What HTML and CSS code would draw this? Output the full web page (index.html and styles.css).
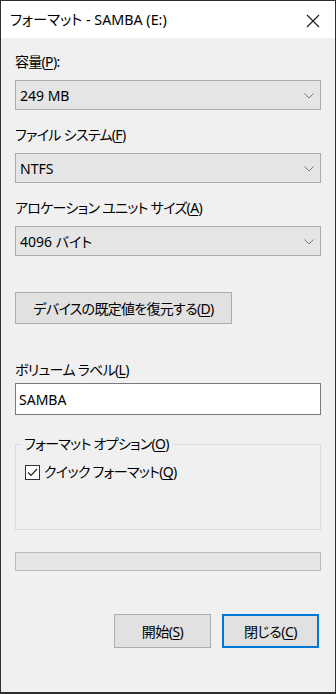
FILE: index.html
```html
<!DOCTYPE html>
<html lang="ja">
<head>
  <meta charset="UTF-8" />
  <meta name="viewport" content="width=device-width, initial-scale=1.0" />
  <title>フォーマット - SAMBA (E:)</title>
  <link rel="stylesheet" href="styles.css">
</head>
<body>
  <div class="window">
    <div class="titlebar">
      <span class="title">フォーマット - SAMBA (E:)</span>
      <svg class="close" width="14" height="14" viewBox="0 0 14 14">
        <path d="M1 1 L13 13 M13 1 L1 13" stroke="#1a1a1a" stroke-width="1.1" fill="none" />
      </svg>
    </div>

    <div class="content">
      <label class="field-label">容量(<u>P</u>):</label>
      <div class="combo">
        <span>249 MB</span>
        <svg class="chevron" width="10" height="6" viewBox="0 0 10 6"><path d="M0.5 0.5 L5 5 L9.5 0.5" stroke="#7a7a7a" fill="none" /></svg>
      </div>

      <label class="field-label">ファイル システム(<u>F</u>)</label>
      <div class="combo">
        <span>NTFS</span>
        <svg class="chevron" width="10" height="6" viewBox="0 0 10 6"><path d="M0.5 0.5 L5 5 L9.5 0.5" stroke="#7a7a7a" fill="none" /></svg>
      </div>

      <label class="field-label">アロケーション ユニット サイズ(<u>A</u>)</label>
      <div class="combo">
        <span>4096 バイト</span>
        <svg class="chevron" width="10" height="6" viewBox="0 0 10 6"><path d="M0.5 0.5 L5 5 L9.5 0.5" stroke="#7a7a7a" fill="none" /></svg>
      </div>

      <button class="btn btn-restore">デバイスの既定値を復元する(<u>D</u>)</button>

      <label class="field-label label-volume">ボリューム ラベル(<u>L</u>)</label>
      <div class="textbox">SAMBA</div>

      <fieldset class="group">
        <legend>フォーマット オプション(<u>O</u>)</legend>
        <div class="check-row">
          <span class="checkbox">
            <svg width="13" height="13" viewBox="0 0 13 13"><path d="M2 6.5 L5 9.5 L11 3" stroke="#222" stroke-width="1.2" fill="none" /></svg>
          </span>
          <span>クイック フォーマット(<u>Q</u>)</span>
        </div>
      </fieldset>

      <div class="progress"></div>

      <div class="actions">
        <button class="btn">開始(<u>S</u>)</button>
        <button class="btn btn-default">閉じる(<u>C</u>)</button>
      </div>
    </div>
  </div>
</body>
</html>
```

FILE: styles.css
```css
body {
  margin: 0;
  padding: 0;
  font-family: "Noto Sans", "Noto Sans CJK JP", sans-serif;
  font-feature-settings: "palt";
  font-size: 14px;
  color: #000;
  background: #f0f0f0;
}
u {
  text-decoration-thickness: 1px;
  text-underline-offset: 2px;
}
.window {
  width: 336px;
  height: 694px;
  box-sizing: border-box;
  border: 1px solid #2e2e2e;
  border-bottom-width: 2px;
  background: #f0f0f0;
}
.titlebar {
  height: 37px;
  background: #fff;
  display: flex;
  align-items: center;
  justify-content: space-between;
  padding: 0 15px 0 9px;
}
.title {
  font-size: 14.3px;
  line-height: 20px;
}
.close {
  margin-top: 2px;
}
.content {
  padding: 14px 14px 0;
}
.field-label {
  display: block;
  line-height: 20px;
  height: 20px;
  margin-top: 15px;
  letter-spacing: -0.7px;
}
.field-label:first-child {
  margin-top: 0;
}
.combo {
  margin-top: 8px;
  height: 30px;
  box-sizing: border-box;
  border: 1px solid #acacac;
  background: #e5e5e5;
  display: flex;
  align-items: center;
  justify-content: space-between;
  padding: 0 6px 0 4px;
}
.chevron {
  margin-top: 1px;
}
.btn {
  font: inherit;
  font-feature-settings: "palt";
  letter-spacing: -0.5px;
  color: #000;
  background: #e1e1e1;
  border: 1px solid #adadad;
  padding: 0;
  height: 34px;
  width: 97px;
}
.btn-restore {
  display: block;
  margin-top: 36px;
  width: 217px;
  height: 32px;
  letter-spacing: -0.7px;
}
.label-volume {
  margin-top: 36px;
}
.textbox {
  margin-top: 3px;
  height: 32px;
  box-sizing: border-box;
  border: 1px solid #7a7a7a;
  background: #fff;
  display: flex;
  align-items: center;
  padding: 0 3px;
}
.group {
  margin: 19px 0 0;
  padding: 8px 9px 0;
  height: 96px;
  box-sizing: border-box;
  border: 1px solid #dcdcdc;
  border-radius: 0;
}
.group legend {
  padding: 0 3px;
  margin-left: -4px;
  line-height: 20px;
  letter-spacing: -0.7px;
}
.check-row {
  display: flex;
  align-items: center;
  gap: 4px;
  line-height: 20px;
  letter-spacing: -0.7px;
}
.checkbox {
  width: 15px;
  height: 15px;
  box-sizing: border-box;
  border: 1px solid #333;
  background: #fff;
  display: flex;
  align-items: center;
  justify-content: center;
}
.progress {
  margin-top: 22px;
  height: 19px;
  box-sizing: border-box;
  border: 1px solid #bcbcbc;
  background: #e6e6e6;
}
.actions {
  margin-top: 43px;
  display: flex;
  justify-content: flex-end;
  gap: 11px;
  padding-right: 2px;
}
.btn-default {
  border: 2px solid #0078d7;
}
```
